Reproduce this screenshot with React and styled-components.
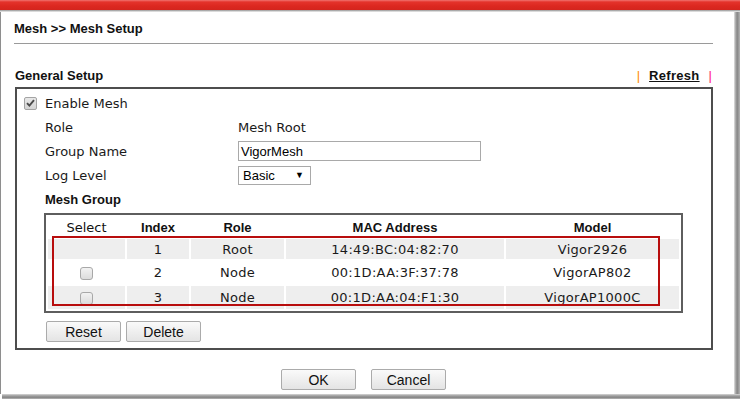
import React from 'react';
import styled, { createGlobalStyle } from 'styled-components';

const GlobalStyle = createGlobalStyle`
  html, body {
    margin: 0;
    padding: 0;
    background: #fff;
  }
  body {
    font-family: 'DejaVu Sans', Verdana, sans-serif;
    color: #1a1a1a;
  }
`;

const Frame = styled.div`
  width: 740px;
  height: 399px;
  display: flex;
  flex-direction: column;
  overflow: hidden;
  background: #fff;
`;

const RedBar = styled.div`
  height: 12px;
  flex: none;
  background: linear-gradient(
    #f07470 0px,
    #e4332b 2px,
    #dc2820 6px,
    #d3251d 10px,
    #8c8c8c 10px,
    #c9c9c9 11px,
    #ececec 12px
  );
`;

const Middle = styled.div`
  flex: 1;
  display: flex;
  min-height: 0;
`;

const Content = styled.div`
  flex: 1;
  border-left: 1px solid #8e8e8e;
  padding-left: 13px;
  display: flex;
  flex-direction: column;
`;

const RightBand = styled.div`
  width: 6px;
  flex: none;
  background: linear-gradient(to right, #e2e2e2, #9a9a9a 35%, #8a8a8a 60%, #b4b4b4);
`;

const BottomBand = styled.div`
  height: 5px;
  flex: none;
  margin-left: 2px;
  background: linear-gradient(#d8d8d8, #9a9a9a 40%, #8a8a8a 70%, #b8b8b8);
`;

const Title = styled.div`
  margin-top: 9px;
  font-family: 'Liberation Sans', Arial, sans-serif;
  font-weight: bold;
  font-size: 13px;
  line-height: 15px;
  color: #111;
`;

const Rule = styled.div`
  margin-top: 7px;
  width: 699px;
  height: 1px;
  background: #9a9a9a;
`;

const SectionHead = styled.div`
  margin-top: 24px;
  width: 699px;
  display: flex;
  justify-content: space-between;
  align-items: center;
  padding-right: 1px;
  box-sizing: border-box;
  font-family: 'Liberation Sans', Arial, sans-serif;
  font-size: 13px;
  line-height: 15px;
`;

const SectionTitle = styled.span`
  font-weight: bold;
  margin-left: 1px;
  color: #111;
`;

const Links = styled.span`
  display: flex;
  align-items: center;
  gap: 9px;
`;

const Pipe = styled.span`
  color: ${p => p.color};
  font-size: 13px;
`;

const LinkText = styled.a`
  font-weight: bold;
  color: #111;
  text-decoration: underline;
  cursor: pointer;
  letter-spacing: 0.3px;
`;

const Box = styled.div`
  margin-top: 4px;
  margin-left: 1px;
  width: 698px;
  box-sizing: border-box;
  border: 2px solid #4d4d4d;
  padding: 2px 0 6px 0;
`;

const FieldRow = styled.div`
  height: 24px;
  display: flex;
  align-items: center;
  padding-left: ${p => p.indent || 28}px;
  font-size: 13px;
`;

const Label = styled.span`
  width: 193px;
  flex: none;
`;

const GroupLabel = styled.span`
  font-family: 'Liberation Sans', Arial, sans-serif;
  font-weight: bold;
  font-size: 13px;
  color: #111;
`;

const CheckedBox = styled.span`
  width: 11px;
  height: 11px;
  border: 1px solid #a4a4a4;
  border-radius: 2px;
  background: linear-gradient(#e8e8e8, #d4d4d4);
  display: inline-flex;
  align-items: center;
  justify-content: center;
  margin-right: 8px;
  flex: none;
`;

const TextInput = styled.div`
  width: 243px;
  height: 20px;
  box-sizing: border-box;
  border: 1px solid #a9a9a9;
  padding-left: 2px;
  display: flex;
  align-items: center;
  font-family: 'Liberation Sans', Arial, sans-serif;
  font-size: 13px;
  color: #000;
`;

const SelectBox = styled.div`
  width: 73px;
  height: 19px;
  box-sizing: border-box;
  border: 1px solid #a9a9a9;
  padding: 0 6px 0 4px;
  display: flex;
  align-items: center;
  justify-content: space-between;
  font-family: 'Liberation Sans', Arial, sans-serif;
  font-size: 13px;
  color: #000;
`;

const Arrow = styled.span`
  font-size: 9px;
`;

const TableWrap = styled.div`
  position: relative;
  margin: 2px 0 0 27px;
  width: 639px;
`;

const Table = styled.table`
  width: 639px;
  border: 2px solid #5e5e5e;
  border-spacing: 2px;
  box-sizing: border-box;
  table-layout: fixed;
`;

const Th = styled.th`
  height: 20px;
  padding: 0;
  text-align: center;
  font-family: ${p => (p.plain ? "'DejaVu Sans', Verdana, sans-serif" : "'Liberation Sans', Arial, sans-serif")};
  font-weight: ${p => (p.plain ? 'normal' : 'bold')};
  font-size: 13px;
  color: #111;
`;

const Td = styled.td`
  height: ${p => p.h}px;
  padding: 0;
  text-align: center;
  font-size: 13px;
  letter-spacing: 0.3px;
  background: ${p => (p.shade ? '#eeeeee' : '#fff')};
  color: #1a1a1a;
  vertical-align: middle;
`;

const RowBox = styled.span`
  display: inline-block;
  width: 11px;
  height: 11px;
  border: 1px solid #a8a8a8;
  border-radius: 3px;
  background: linear-gradient(#f2f2f2, #dcdcdc);
  vertical-align: middle;
`;

const Highlight = styled.div`
  position: absolute;
  left: 8px;
  top: 23px;
  width: 608px;
  height: 70px;
  box-sizing: border-box;
  border: 2px solid #b80d0d;
  pointer-events: none;
`;

const ButtonRow = styled.div`
  display: flex;
  gap: ${p => p.gap}px;
  margin: ${p => p.margin};
  justify-content: ${p => p.justify || 'flex-start'};
`;

const Button = styled.button`
  width: 75px;
  height: 21px;
  padding: 0;
  box-sizing: border-box;
  border: 1px solid #ababab;
  border-radius: 2px;
  background: linear-gradient(#fafafa, #e4e4e4);
  font-family: 'Liberation Sans', Arial, sans-serif;
  font-size: 14px;
  color: #111;
  cursor: pointer;
`;

const rows = [
  { index: 1, role: 'Root', mac: '14:49:BC:04:82:70', model: 'Vigor2926', check: false, h: 20 },
  { index: 2, role: 'Node', mac: '00:1D:AA:3F:37:78', model: 'VigorAP802', check: true, h: 23 },
  { index: 3, role: 'Node', mac: '00:1D:AA:04:F1:30', model: 'VigorAP1000C', check: true, h: 23 },
];

const App = () => (
  <>
    <GlobalStyle />
    <Frame>
      <RedBar />
      <Middle>
        <Content>
          <Title>Mesh &gt;&gt; Mesh Setup</Title>
          <Rule />
          <SectionHead>
            <SectionTitle>General Setup</SectionTitle>
            <Links>
              <Pipe color="#ff8c00">|</Pipe>
              <LinkText>Refresh</LinkText>
              <Pipe color="#ff1a75">|</Pipe>
            </Links>
          </SectionHead>
          <Box>
            <FieldRow indent={7}>
              <CheckedBox>
                <svg width="9" height="8" viewBox="0 0 9 8">
                  <path d="M1 4.2 L3.4 6.6 L8 1.2" fill="none" stroke="#4a4a4a" strokeWidth="1.9" />
                </svg>
              </CheckedBox>
              Enable Mesh
            </FieldRow>
            <FieldRow>
              <Label>Role</Label>
              <span>Mesh Root</span>
            </FieldRow>
            <FieldRow>
              <Label>Group Name</Label>
              <TextInput>VigorMesh</TextInput>
            </FieldRow>
            <FieldRow>
              <Label>Log Level</Label>
              <SelectBox>
                Basic <Arrow>▼</Arrow>
              </SelectBox>
            </FieldRow>
            <FieldRow>
              <GroupLabel>Mesh Group</GroupLabel>
            </FieldRow>
            <TableWrap>
              <Table>
                <colgroup>
                  <col style={{ width: 77 }} />
                  <col style={{ width: 62 }} />
                  <col style={{ width: 93 }} />
                  <col style={{ width: 218 }} />
                  <col style={{ width: 173 }} />
                </colgroup>
                <thead>
                  <tr>
                    <Th plain>Select</Th>
                    <Th>Index</Th>
                    <Th>Role</Th>
                    <Th>MAC Address</Th>
                    <Th>Model</Th>
                  </tr>
                </thead>
                <tbody>
                  {rows.map((r, i) => (
                    <tr key={r.index}>
                      <Td h={r.h} shade={i % 2 === 0}>{r.check && <RowBox />}</Td>
                      <Td h={r.h} shade={i % 2 === 0}>{r.index}</Td>
                      <Td h={r.h} shade={i % 2 === 0}>{r.role}</Td>
                      <Td h={r.h} shade={i % 2 === 0}>{r.mac}</Td>
                      <Td h={r.h} shade={i % 2 === 0}>{r.model}</Td>
                    </tr>
                  ))}
                </tbody>
              </Table>
              <Highlight />
            </TableWrap>
            <ButtonRow gap={5} margin="8px 0 0 29px">
              <Button>Reset</Button>
              <Button>Delete</Button>
            </ButtonRow>
          </Box>
          <ButtonRow gap={15} margin="19px 0 0 0" justify="center" style={{ width: 699 }}>
            <Button>OK</Button>
            <Button>Cancel</Button>
          </ButtonRow>
        </Content>
        <RightBand />
      </Middle>
      <BottomBand />
    </Frame>
  </>
);

export default App;
